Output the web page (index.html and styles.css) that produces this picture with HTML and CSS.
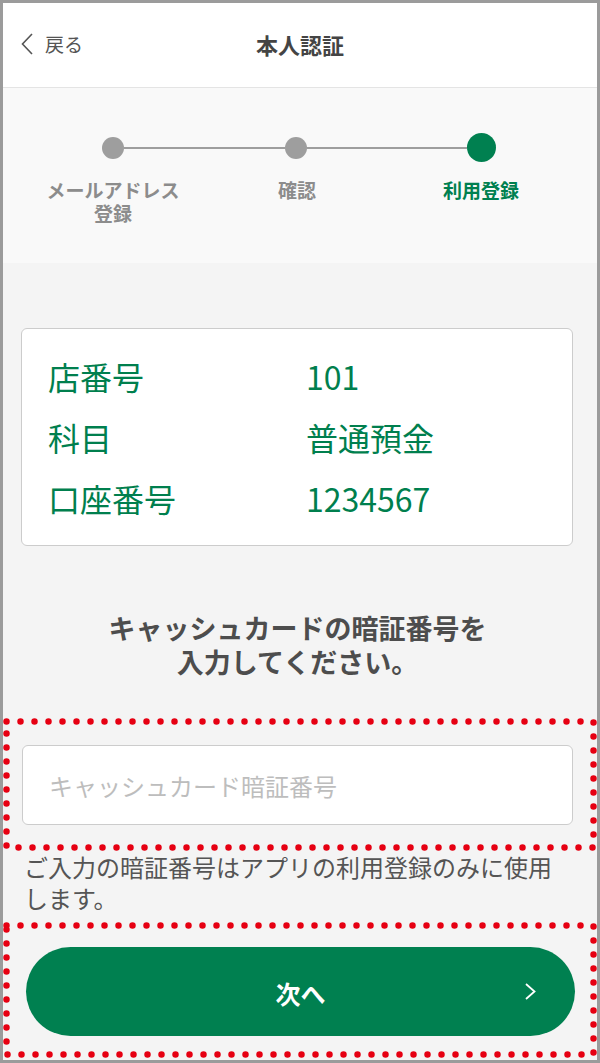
FILE: index.html
```html
<!DOCTYPE html>
<html lang="ja">
<head>
    <meta charset="UTF-8">
    <meta name="viewport" content="width=device-width, initial-scale=1.0">
    <title>本人認証</title>
    <link rel="stylesheet" href="styles.css">
</head>
<body>

<div class="app">
    <header class="header">
        <a class="back" href="#">
            <svg class="back-icon" width="12" height="22" viewBox="0 0 12 22"><polyline points="11,1 1.5,11 11,21" /></svg>
            <span>戻る</span>
        </a>
        <h1 class="title">本人認証</h1>
        <span></span>
    </header>

    <section class="stepper">
        <div class="track">
            <span class="dot"></span>
            <span class="line"></span>
            <span class="dot"></span>
            <span class="line"></span>
            <span class="dot dot-current"></span>
        </div>
        <div class="labels">
            <div><span class="label-line">メールアドレス</span><span class="label-line">登録</span></div>
            <div><span class="label-line">確認</span></div>
            <div class="label-current"><span class="label-line">利用登録</span></div>
        </div>
    </section>

    <main class="main">
        <div class="card">
            <div class="row"><span>店番号</span><span>101</span></div>
            <div class="row"><span>科目</span><span>普通預金</span></div>
            <div class="row"><span>口座番号</span><span>1234567</span></div>
        </div>

        <h2 class="lead">
            <span class="lead-line">キャッシュカードの暗証番号を</span>
            <span class="lead-line">入力してください。</span>
        </h2>

        <div class="mark mark-input">
            <svg class="mark-dots"><rect class="dots" x="3.5" y="3.5" /></svg>
            <input class="pin" type="password" placeholder="キャッシュカード暗証番号">
        </div>

        <p class="note">ご入力の暗証番号はアプリの利用登録のみに使用します。</p>

        <div class="mark mark-button">
            <svg class="mark-dots"><rect class="dots" x="3.5" y="3.5" /></svg>
            <button class="next">
                <span></span>
                <span class="next-text">次へ</span>
                <svg class="next-icon" width="11" height="17" viewBox="0 0 11 17"><polyline points="1,1 9.5,8.5 1,16" /></svg>
            </button>
        </div>
    </main>
</div>

</body>
</html>
```

FILE: styles.css
```css
/* 本人認証 - 利用登録 */
body {
    margin: 0;
    font-family: "Noto Sans CJK JP", "Noto Sans", sans-serif;
    color: #4a4a4a;
}
.app {
    height: 1063px;
    box-sizing: border-box;
    border: 3px solid #9b9b9b;
    background-color: #f4f4f4;
    overflow: hidden;
}

/* ヘッダー */
.header {
    display: grid;
    grid-template-columns: 1fr auto 1fr;
    align-items: center;
    height: 85px;
    padding: 0 18px 3px;
    box-sizing: border-box;
    background-color: #ffffff;
    border-bottom: 1px solid #e4e4e4;
}
.back {
    display: flex;
    align-items: center;
    gap: 12px;
    font-size: 19px;
    color: #555555;
    text-decoration: none;
}
.back-icon polyline {
    fill: none;
    stroke: #555555;
    stroke-width: 1.6;
}
.title {
    margin: 0;
    font-size: 22px;
    font-weight: bold;
    color: #444444;
}

/* ステップ */
.stepper {
    height: 175px;
    padding-top: 45px;
    box-sizing: border-box;
    background-color: #f9f9f9;
}
.track {
    display: flex;
    align-items: center;
    padding: 0 101px 0 99px;
}
.dot {
    width: 22px;
    height: 22px;
    border-radius: 50%;
    background-color: #9e9e9e;
}
.dot-current {
    width: 29px;
    height: 29px;
    background-color: #008050;
}
.line {
    flex: 1;
    height: 2px;
    background-color: #9e9e9e;
}
.labels {
    display: grid;
    grid-template-columns: repeat(3, 184px);
    padding-left: 18px;
    margin-top: 16px;
    font-size: 19px;
    font-weight: bold;
    text-align: center;
    color: #8c8c8c;
}
.label-line {
    display: block;
    height: 23px;
    line-height: 23px;
}
.label-current {
    color: #008050;
}

/* 口座情報 */
.main {
    padding: 0 24px 0 19px;
}
.card {
    margin: 65px 0 0 -1px;
    padding: 17px 26px 16px;
    background-color: #ffffff;
    border: 1px solid #cccccc;
    border-radius: 6px;
}
.row {
    display: grid;
    grid-template-columns: 258px 1fr;
    font-size: 32px;
    line-height: 61px;
    color: #007f4e;
}
.lead {
    margin: 65px 0 0;
    font-size: 27px;
    font-weight: bold;
    text-align: center;
    color: #4d4d4d;
}
.lead-line {
    display: block;
    height: 34px;
    line-height: 34px;
}

/* 赤い点線の枠 */
.mark {
    position: relative;
    margin: 0 -24px 0 -19px;
}
.mark-dots {
    position: absolute;
    top: 0;
    left: 0;
    width: 100%;
    height: 100%;
    overflow: visible;
}
.dots {
    width: calc(100% - 7px);
    height: calc(100% - 7px);
    fill: none;
    stroke: #e60012;
    stroke-width: 6.5;
    stroke-linecap: round;
    stroke-dasharray: 0 14;
}
.mark-input {
    margin-top: 39px;
    padding: 27px 24px 26px 19px;
}
.pin {
    display: block;
    width: 100%;
    height: 80px;
    box-sizing: border-box;
    padding: 0 26px;
    font-family: inherit;
    font-size: 24px;
    background-color: #ffffff;
    border: 1px solid #cccccc;
    border-radius: 6px;
    outline: none;
}
.pin::placeholder {
    color: #bdbdbd;
}
.note {
    margin: 0;
    padding-left: 2px;
    font-size: 24px;
    line-height: 31px;
    color: #555555;
}
.mark-button {
    margin-top: 9px;
    padding: 25px 22px 22px 23px;
}
.next {
    display: grid;
    grid-template-columns: 1fr auto 1fr;
    align-items: center;
    width: 100%;
    height: 89px;
    padding: 2px 39px 0;
    font-family: inherit;
    font-size: 25px;
    font-weight: bold;
    color: #ffffff;
    background-color: #008050;
    border: none;
    border-radius: 45px;
    cursor: pointer;
}
.next-icon {
    justify-self: end;
    margin-top: -2px;
}
.next-icon polyline {
    fill: none;
    stroke: #ffffff;
    stroke-width: 1.8;
}
```
